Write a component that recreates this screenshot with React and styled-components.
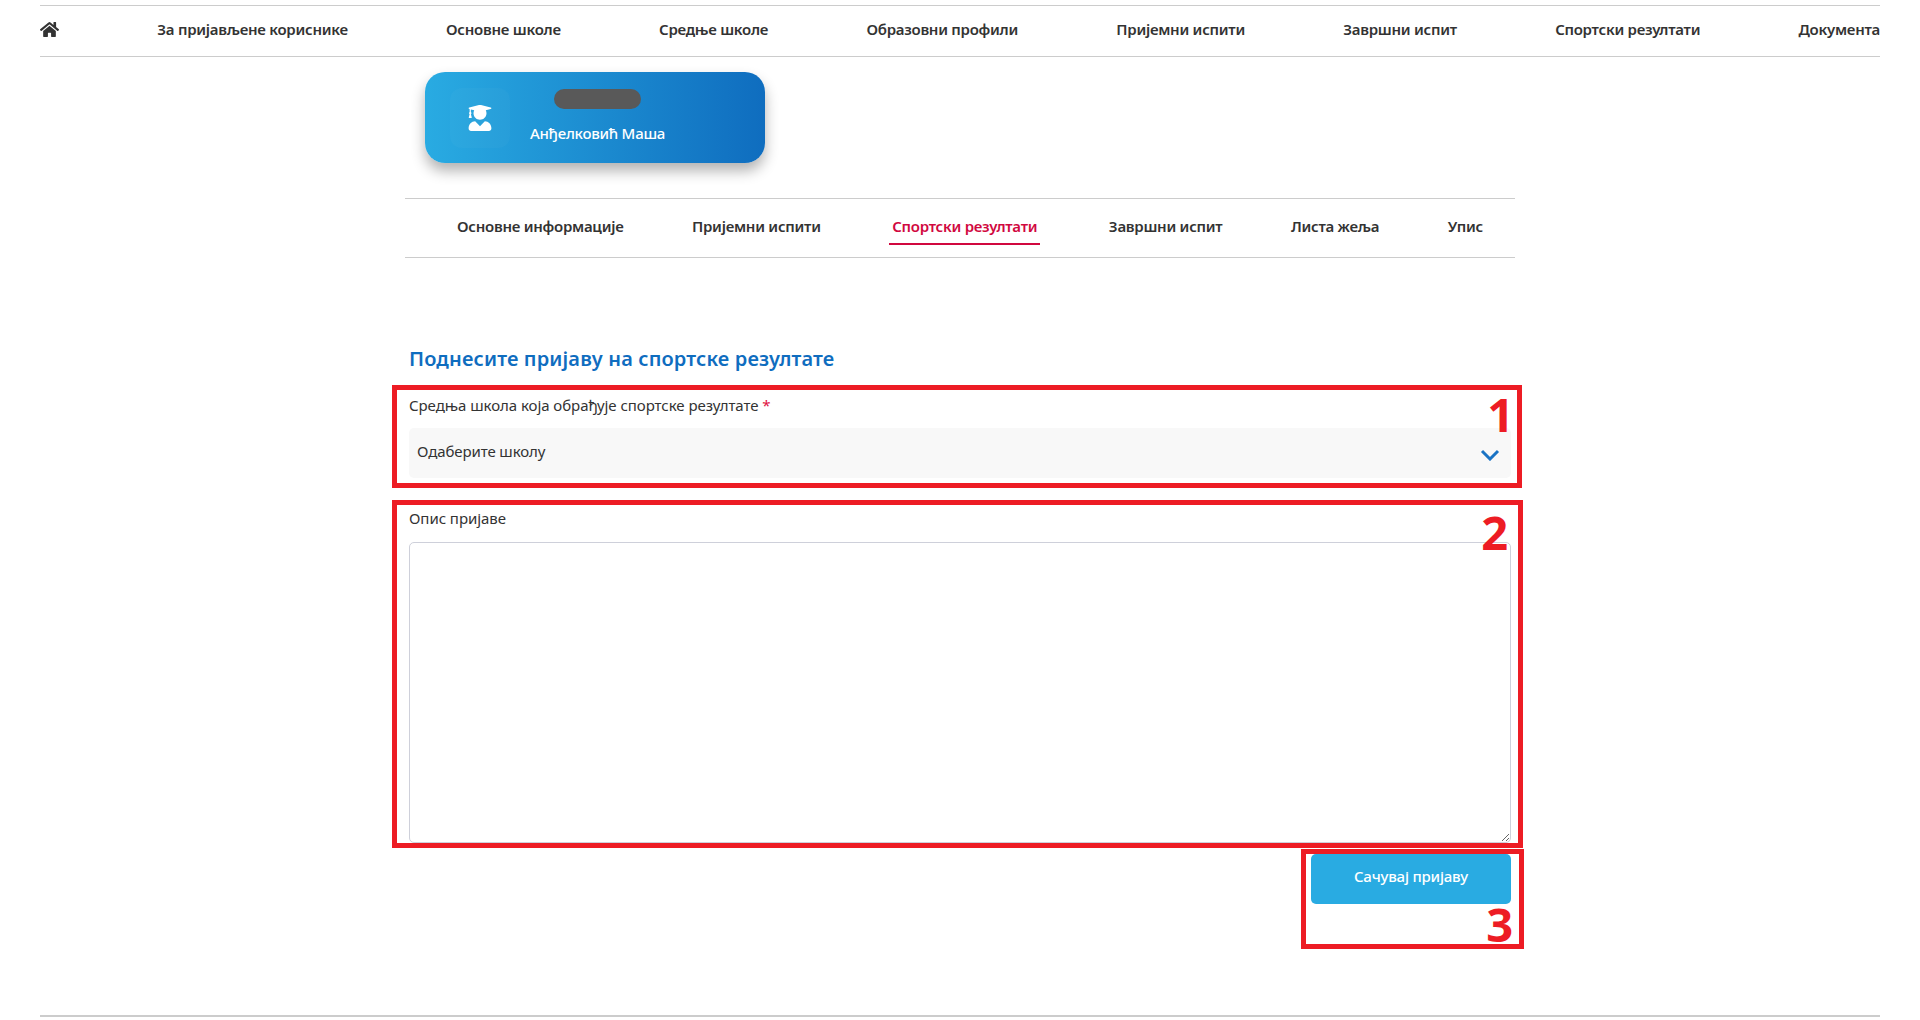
import React from 'react'
import styled, { createGlobalStyle } from 'styled-components'
import { FaHome, FaUserGraduate } from 'react-icons/fa'

const mainNav = ['За пријављене кориснике', 'Основне школе', 'Средње школе', 'Образовни профили', 'Пријемни испити', 'Завршни испит', 'Спортски резултати', 'Документа']
const subNav = ['Основне информације', 'Пријемни испити', 'Спортски резултати', 'Завршни испит', 'Листа жеља', 'Упис']

const App = () => {
    return (
        <Page>
            <GlobalStyle />
            <TopNav>
                <HomeLink><FaHome size={19} /></HomeLink>
                {mainNav.map(item => <TopLink key={item}>{item}</TopLink>)}
            </TopNav>
            <Content>
                <StudentCard>
                    <IconTile><FaUserGraduate size={26} color="#fff" /></IconTile>
                    <StudentInfo>
                        <HiddenId />
                        <StudentName>Анђелковић Маша</StudentName>
                    </StudentInfo>
                </StudentCard>
                <SubNav>
                    {subNav.map(item => (
                        <SubLink key={item} $active={item === 'Спортски резултати'}>{item}</SubLink>
                    ))}
                </SubNav>
                <Form>
                    <Heading>Поднесите пријаву на спортске резултате</Heading>
                    <Label>Средња школа која обрађује спортске резултате <Required>*</Required></Label>
                    <SelectWrap>
                        <Select defaultValue="">
                            <option value="">Одаберите школу</option>
                        </Select>
                        <Chevron viewBox="0 0 20 12" fill="none">
                            <path d="M2 2l8 8 8-8" stroke="#1a73c4" strokeWidth="3" />
                        </Chevron>
                    </SelectWrap>
                    <SecondLabel>Опис пријаве</SecondLabel>
                    <TextArea />
                    <Actions>
                        <SaveButton type="button">Сачувај пријаву</SaveButton>
                    </Actions>
                </Form>
            </Content>
            <BottomLine />
            <Marker $left={392} $top={385} $width={1130} $height={103}><MarkerNumber $right={3} $top={-4}>1</MarkerNumber></Marker>
            <Marker $left={392} $top={500} $width={1131} $height={348}><MarkerNumber $right={10} $top={-1}>2</MarkerNumber></Marker>
            <Marker $left={1301} $top={849} $width={223} $height={100}><MarkerNumber $right={6} $top={42}>3</MarkerNumber></Marker>
        </Page>
    )
}

export default App

const GlobalStyle = createGlobalStyle`
    html, body {
        margin: 0;
        padding: 0;
        background: #fff;
        overflow: hidden;
    }
    * {
        box-sizing: border-box;
    }
`

const Page = styled.div`
    position: relative;
    height: 1020px;
    padding: 5px 40px 0 40px;
    font-family: "Noto Sans", "Open Sans", sans-serif;
    color: #333;
`

const TopNav = styled.nav`
    display: flex;
    justify-content: space-between;
    align-items: center;
    height: 52px;
    padding-bottom: 4px;
    border-top: 1px solid #ccc;
    border-bottom: 1px solid #ccc;
`

const HomeLink = styled.a`
    display: flex;
    color: #333;
`

const TopLink = styled.a`
    font-size: 15px;
    font-weight: 600;
    letter-spacing: -0.27px;
    color: #333;
    white-space: nowrap;
`

const Content = styled.main`
    width: 1110px;
    margin: 15px 0 0 365px;
`

const StudentCard = styled.div`
    display: flex;
    align-items: center;
    width: 340px;
    height: 91px;
    margin-left: 20px;
    padding-left: 25px;
    border-radius: 20px;
    background: linear-gradient(90deg, #29abe2, #0f6dbf);
    box-shadow: 0 8px 14px rgba(0, 0, 0, 0.3);
`

const IconTile = styled.div`
    display: flex;
    align-items: center;
    justify-content: center;
    width: 60px;
    height: 60px;
    border-radius: 12px;
    background: rgba(255, 255, 255, 0.025);
`

const StudentInfo = styled.div`
    display: flex;
    flex-direction: column;
    align-items: center;
    width: 135px;
    margin-left: 20px;
    padding-bottom: 2px;
`

const HiddenId = styled.div`
    width: 87px;
    height: 20px;
    border-radius: 10px;
    background: #595959;
`

const StudentName = styled.div`
    margin-top: 13px;
    font-size: 15px;
    font-weight: 500;
    line-height: 22px;
    letter-spacing: -0.25px;
    color: #fff;
    white-space: nowrap;
`

const SubNav = styled.nav`
    display: flex;
    justify-content: space-between;
    height: 60px;
    margin-top: 35px;
    padding: 0 32px 0 52px;
    border-top: 1px solid #ccc;
    border-bottom: 1px solid #ccc;
`

const SubLink = styled.a`
    height: 46px;
    padding: 0 ${props => (props.$active ? '3px' : '0')};
    font-size: 15px;
    font-weight: 600;
    line-height: 54px;
    letter-spacing: -0.27px;
    white-space: nowrap;
    color: ${props => (props.$active ? '#d1083f' : '#333')};
    border-bottom: 2px solid ${props => (props.$active ? '#d1083f' : 'transparent')};
`

const Form = styled.form`
    padding: 84px 4px 0 4px;
`

const Heading = styled.h2`
    margin: 0 0 19px 0;
    font-size: 20px;
    font-weight: 600;
    line-height: 34px;
    letter-spacing: 0.15px;
    color: #0f6dbf;
`

const Label = styled.label`
    display: block;
    height: 33px;
    font-size: 15px;
    line-height: 20px;
    letter-spacing: -0.05px;
    color: #333;
`

const Required = styled.span`
    color: #e0103f;
`

const SelectWrap = styled.div`
    position: relative;
`

const Select = styled.select`
    display: block;
    width: 100%;
    height: 50px;
    padding: 0 8px 5px;
    border: 0;
    border-radius: 5px;
    background: #f8f8f8;
    font-family: inherit;
    font-size: 15px;
    letter-spacing: -0.1px;
    color: #333;
    appearance: none;
`

const Chevron = styled.svg`
    position: absolute;
    top: 21px;
    right: 11px;
    width: 20px;
    height: 12px;
`

const SecondLabel = styled(Label)`
    margin-top: 31px;
    line-height: 18px;
`

const TextArea = styled.textarea`
    display: block;
    width: 100%;
    height: 301px;
    border: 1px solid #ced0da;
    border-radius: 5px;
    background: #fff;
`

const Actions = styled.div`
    display: flex;
    justify-content: flex-end;
    margin-top: 11px;
`

const SaveButton = styled.button`
    width: 200px;
    height: 50px;
    padding-bottom: 7px;
    border: 0;
    border-radius: 5px;
    background: #29abe2;
    font-family: inherit;
    font-size: 15px;
    font-weight: 500;
    letter-spacing: -0.2px;
    color: #fff;
`

const BottomLine = styled.div`
    height: 2px;
    margin-top: 111px;
    background: #ccc;
`

const Marker = styled.div`
    position: absolute;
    left: ${props => props.$left}px;
    top: ${props => props.$top}px;
    width: ${props => props.$width}px;
    height: ${props => props.$height}px;
    border: 5px solid #ed1c24;
    pointer-events: none;
`

const MarkerNumber = styled.span`
    position: absolute;
    right: ${props => props.$right}px;
    top: ${props => props.$top}px;
    font-family: "Open Sans", sans-serif;
    font-size: 47px;
    font-weight: 700;
    line-height: 56px;
    color: #ed1c24;
`
